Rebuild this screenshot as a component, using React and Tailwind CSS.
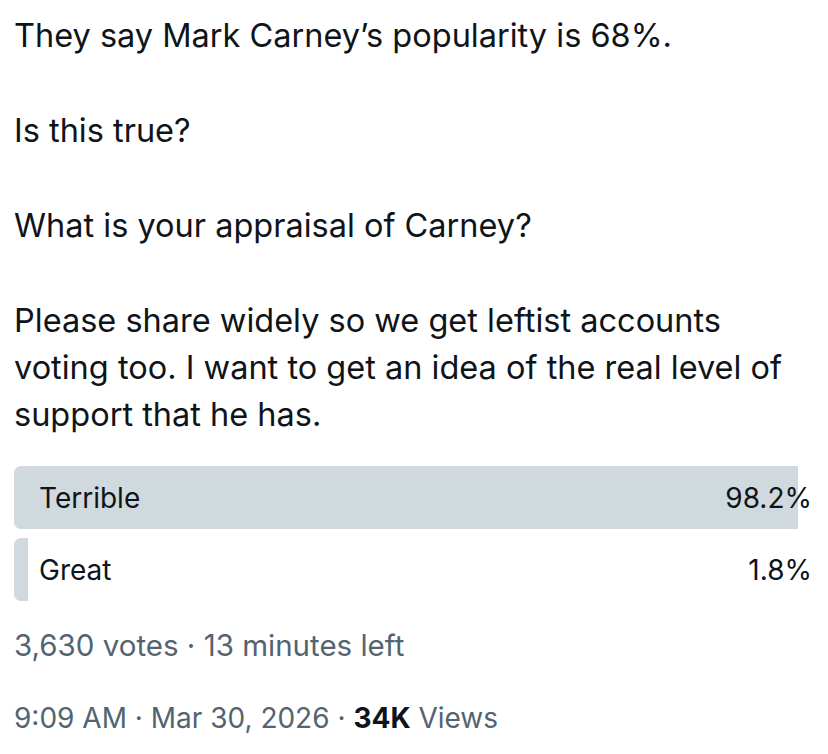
import React from 'react';

const options = [
  { label: 'Terrible', pct: 98.2 },
  { label: 'Great', pct: 1.8 },
];

const PollRow = ({ label, pct }) => (
  <div className="relative flex items-center justify-between h-[63px]">
    <div
      className="absolute left-0 top-0 h-full bg-[#cfd9de] rounded-l-[7px]"
      style={{ width: `${pct}%` }}
    />
    <span className="relative pl-[25px]">{label}</span>
    <span className="relative">{pct}%</span>
  </div>
);

const App = () => {
  return (
    <div
      className="w-[828px] h-[754px] bg-white text-[#0f1419] pl-[14px] pr-[16px] pt-[12px] overflow-hidden"
      style={{ fontFamily: 'Inter, "Noto Sans", sans-serif' }}
    >
      <div className="text-[32.5px] leading-[47px] flex flex-col gap-[48px]">
        <p>They say Mark Carney’s popularity is 68%.</p>
        <p>Is this true?</p>
        <p>What is your appraisal of Carney?</p>
        <p>
          Please share widely so we get leftist accounts
          <br />
          voting too. I want to get an idea of the real level of
          <br />
          support that he has.
        </p>
      </div>

      <div className="mt-[28px] flex flex-col gap-[9px] text-[28px]">
        {options.map((o) => (
          <PollRow key={o.label} label={o.label} pct={o.pct} />
        ))}
      </div>

      <div className="mt-[26px] text-[29.5px] leading-[36px] text-[#536471]">
        3,630 votes · 13 minutes left
      </div>

      <div className="mt-[37px] text-[28px] leading-[36px] text-[#536471]">
        9:09 AM · Mar 30, 2026 · <span className="font-bold text-[#0f1419]">34K</span> Views
      </div>
    </div>
  );
};

export default App;
